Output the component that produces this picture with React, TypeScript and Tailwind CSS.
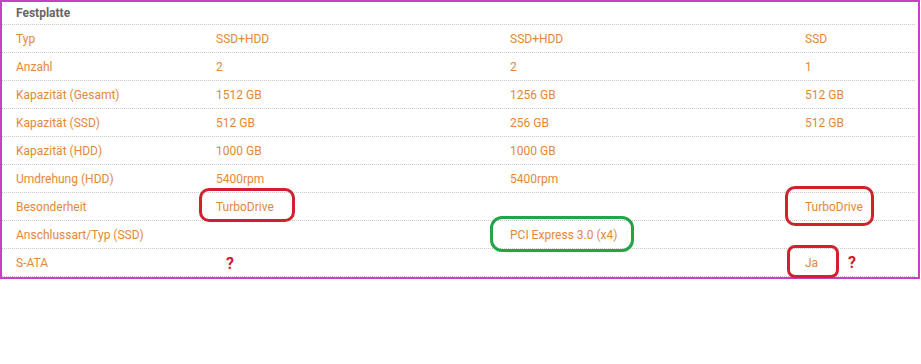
const rows: [string, string, string, string][] = [
  ["Typ", "SSD+HDD", "SSD+HDD", "SSD"],
  ["Anzahl", "2", "2", "1"],
  ["Kapazität (Gesamt)", "1512 GB", "1256 GB", "512 GB"],
  ["Kapazität (SSD)", "512 GB", "256 GB", "512 GB"],
  ["Kapazität (HDD)", "1000 GB", "1000 GB", ""],
  ["Umdrehung (HDD)", "5400rpm", "5400rpm", ""],
  ["Besonderheit", "TurboDrive", "", "TurboDrive"],
  ["Anschlussart/Typ (SSD)", "", "PCI Express 3.0 (x4)", ""],
  ["S-ATA", "", "", "Ja"],
]

const App = () => {
  return (
    <main className="w-[921px] h-[364px] bg-white font-['Roboto','Liberation_Sans',sans-serif]">
      <div className="relative w-[920px] h-[279px] border-2 border-[#c63fc6]">
        <div className="h-[23px] border-b border-dotted border-[#c9c9c9] mr-[3px] pl-[14px] flex items-center">
          <p className="text-[12px] font-bold text-[#666666]">Festplatte</p>
        </div>
        {rows.map((r, id) => (
          <div
            key={id}
            className="h-[28px] border-b border-dotted border-[#c9c9c9] mr-[3px] pl-[14px] grid grid-cols-[200px_294px_295px_1fr] items-center text-[12px] text-[#e3883a]"
          >
            <p>{r[0]}</p>
            <p>{r[1]}</p>
            <p>{r[2]}</p>
            <p>{r[3]}</p>
          </div>
        ))}

        {/* annotations drawn on top */}
        <div className="absolute left-[197px] top-[186px] w-[96px] h-[34px] border-[3px] border-[#d3202c] rounded-[10px]" />
        <div className="absolute left-[783px] top-[184px] w-[89px] h-[40px] border-[3px] border-[#d3202c] rounded-[10px]" />
        <div className="absolute left-[785px] top-[243px] w-[52px] h-[33px] border-[3px] border-[#d3202c] rounded-[8px]" />
        <div className="absolute left-[488px] top-[214px] w-[144px] h-[36px] border-[3px] border-[#22a447] rounded-[12px]" />
        <span className="absolute left-[224px] top-[250px] text-[16px] font-bold text-[#d3202c]">?</span>
        <span className="absolute left-[846px] top-[249px] text-[16px] font-bold text-[#d3202c]">?</span>
      </div>
    </main>
  )
}

export default App
